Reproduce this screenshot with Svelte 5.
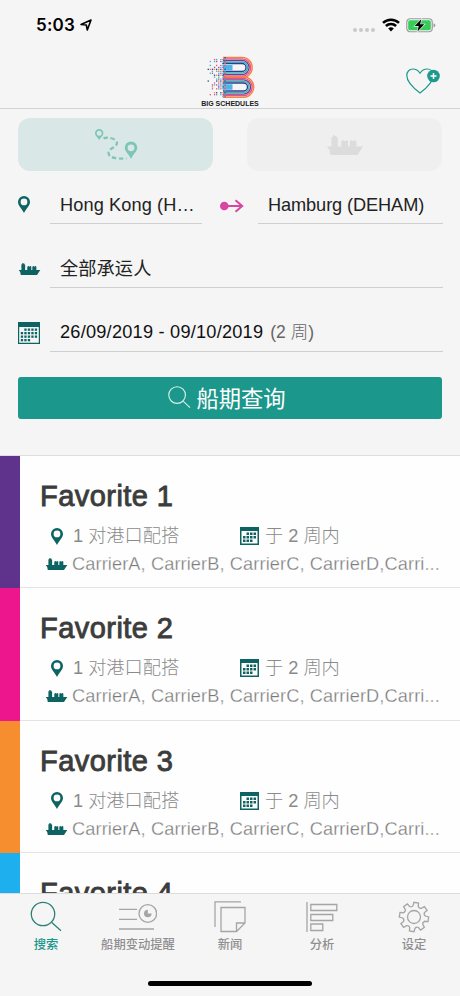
<script>
  const favorites = [
    { name: 'Favorite 1', color: 'purple', pairs: 1, weeks: 2 },
    { name: 'Favorite 2', color: 'pink', pairs: 1, weeks: 2 },
    { name: 'Favorite 3', color: 'orange', pairs: 1, weeks: 2 },
    { name: 'Favorite 4', color: 'blue' }
  ];
  const carriers = 'CarrierA, CarrierB, CarrierC, CarrierD,Carri...';

  const tabs = [
    { id: 'search', label: '搜索' },
    { id: 'alerts', label: '船期变动提醒' },
    { id: 'news', label: '新闻' },
    { id: 'analysis', label: '分析' },
    { id: 'settings', label: '设定' }
  ];
  let active = 'search';

  // logo stripes, from the outside in
  const stripes = ['#f58345', '#ec4f83', '#7a3b8e', '#35b5b0', '#2d3f92'];
  const lobes = [
    { y: 0.5, h: 22, x: 37 },
    { y: 20, h: 22, x: 38.5 }
  ];

  function lobePath(lobe, i) {
    const inset = 0.8 + i * 1.55;
    const r = lobe.h / 2 - inset;
    return `M18 ${lobe.y + inset}H${lobe.x}a${r} ${r} 0 0 1 0 ${r * 2}H18`;
  }

  // the left side of the logo breaks up into pixels
  const pixels = [];
  const pixelColors = ['#f58345', '#ec4f83', '#44aee5', '#2d3f92', '#35b5b0', '#a64a96'];
  for (let row = 0; row < 21; row++) {
    for (let col = 0; col < 10; col++) {
      const noise = (row * 37 + col * 53 + row * col * 11) % 17;
      if (noise < col * 1.9) {
        pixels.push({ x: 0.5 + col * 2.1, y: 1 + row * 1.95, fill: pixelColors[(row + (col % 2) * 3) % 6] });
      }
    }
  }

  // 8 teeth
  const gear = Array.from({ length: 8 }, (_, i) => {
    const at = (deg, r) => {
      const a = ((deg + i * 45 - 81) * Math.PI) / 180;
      return `${(16 + r * Math.cos(a)).toFixed(2)} ${(16 + r * Math.sin(a)).toFixed(2)}`;
    };
    return `${i ? 'L' : 'M'}${at(-14, 11.4)}L${at(-9, 14.7)}L${at(9, 14.7)}L${at(13, 11.4)}Q${at(22.5, 9.8)} ${at(31, 11.4)}`;
  }).join('') + 'Z';
</script>

{#snippet pin(cls)}
  <svg class={cls} viewBox="0 0 12 17">
    <path fill-rule="evenodd" d="M6 0a6 6 0 0 1 6 6c0 3.6-3.5 6-6 11C3.5 12 0 9.6 0 6a6 6 0 0 1 6-6zm0 2.500a3.400 3.400 0 1 0 0 6.800 3.400 3.400 0 0 0 0-6.800z" />
  </svg>
{/snippet}

{#snippet ship(cls)}
  <svg class={cls} viewBox="0 0 36 20">
    <path d="M0 11.500h4.500V2H6V0h1.500v1h2v1.500h1.200v9h3.600V6h1.200V5h1.200v1H19V5h1.200v1h.8v5.500h1.700V6h1.200V5h1.200v1h2.300V5h1.200v1h.8v5.500H36L30.500 20H3.500L2.500 15z" />
  </svg>
{/snippet}

{#snippet calendar(cls)}
  <svg class={cls} viewBox="0 0 22 22">
    <path d="M0 0h22v22H0zM1.200 5v15.800h19.600V5z" fill-rule="evenodd" />
    {#each [6.500, 10, 13.500, 17] as y, r}
      {#each [2.800, 6.300, 9.800, 13.300, 16.800] as x, c}
        {#if !(r === 0 && c < 1) && !(r === 3 && c > 2)}
          <rect {x} {y} width="2.300" height="2.300" />
        {/if}
      {/each}
    {/each}
  </svg>
{/snippet}

{#snippet smallCalendar(cls)}
  <svg class={cls} viewBox="0 0 19 18">
    <path d="M0 0h19v18H0zM1.500 4v12.500h16V4z" fill-rule="evenodd" />
    {#each [5.500, 9, 12.500] as y, r}
      {#each [3, 6.500, 10, 13.500] as x, c}
        {#if !(r === 0 && c < 1) && !(r === 2 && c > 2)}
          <rect {x} {y} width="2.500" height="2.500" />
        {/if}
      {/each}
    {/each}
  </svg>
{/snippet}

<div class="app">
  <header>
    <div class="status">
      <div class="clock">
        <span>5:03</span>
        <svg class="location" viewBox="0 0 12 12">
          <path d="M1 5.500 11 1 7.300 11 6.300 6z" />
        </svg>
      </div>
      <div class="signals">
        <i></i><i></i><i></i><i></i>
        <svg class="wifi" viewBox="0 0 18 14">
          <path d="M1 4.900a11.500 11.500 0 0 1 16 0M3.900 8a7.300 7.300 0 0 1 10.200 0" />
          <path class="wifi-dot" d="M6.200 10.600a4 4 0 0 1 5.600 0L9 13.500z" />
        </svg>
        <svg class="battery" viewBox="0 0 30 15">
          <rect class="shell" x=".75" y=".75" width="25.500" height="13" rx="3.500" />
          <rect class="charge" x="2.200" y="2.200" width="22.600" height="10.100" rx="1.800" />
          <path class="cap" d="M27.500 5.200q1.800.6 1.800 2.100t-1.800 2.100z" />
          <path class="bolt" d="M15.300 1.300 8.700 8.100h4L11.500 13.400l6.800-7.100h-4.100z" />
        </svg>
      </div>
    </div>
    <div class="brand">
      <div class="logo">
        <svg viewBox="0 0 50 43">
          {#each lobes as lobe}
            {#each stripes as color, i}
              <path d={lobePath(lobe, i)} stroke={color} />
            {/each}
          {/each}
          <path class="stem" d="M18 9h9.500v5.500H18zM18 28.300h9.500v5.500H18z" />
          {#each pixels as p}
            <rect x={p.x} y={p.y} width="1.300" height="1.300" fill={p.fill} />
          {/each}
        </svg>
        <span>BIG SCHEDULES</span>
      </div>
      <svg class="heart" viewBox="0 0 34 26">
        <path d="M14 25C8 20.500.8 14.500.8 7.500.8 3.500 3.500 1 6.800 1 10 1 12.500 2.800 14 5.200 15.500 2.800 18 1 21.200 1c3.300 0 6 2.500 6 6.500C27.200 14.500 20 20.500 14 25z" />
        <circle cx="27.500" cy="8" r="6.300" />
        <path class="plus" d="M27.500 5v6M24.500 8h6" />
      </svg>
    </div>
  </header>

  <section class="form">
    <div class="modes">
      <button class="mode selected" aria-label="Route">
        <svg class="route" viewBox="0 0 43 32">
          <path class="trail" d="M8.500 9.500c4-2 13 0 13.500 4.500.3 4-8.500 5.500-8.500 9.500 0 5 6.500 6.500 18 6" />
          <path fill-rule="evenodd" d="M4.200 0a4.200 4.200 0 0 1 4.200 4.200c0 2.400-2.600 3.800-4.200 6.800C2.600 8 0 6.600 0 4.200A4.200 4.200 0 0 1 4.200 0zm0 1.700a2.500 2.500 0 1 0 0 5 2.500 2.500 0 0 0 0-5z" />
          <path fill-rule="evenodd" d="M36 12.500a6.300 6.300 0 0 1 6.300 6.300c0 3.700-4 6-6.300 11.200-2.300-5.200-6.300-7.500-6.300-11.200a6.300 6.300 0 0 1 6.300-6.300zm0 2.900a3.400 3.400 0 1 0 0 6.800 3.400 3.400 0 0 0 0-6.800z" />
        </svg>
      </button>
      <button class="mode" aria-label="Vessel">{@render ship('vessel')}</button>
    </div>

    <div class="row ports">
      <div class="icon">{@render pin('pin')}</div>
      <div class="field origin">Hong Kong (H…</div>
      <svg class="arrow" viewBox="0 0 24 14">
        <circle cx="4.300" cy="7" r="4.300" />
        <path d="M5 7h17M15.500 1.300 22.200 7l-6.700 5.700" />
      </svg>
      <div class="field dest">Hamburg (DEHAM)</div>
    </div>
    <div class="row carrier">
      <div class="icon">{@render ship('boat')}</div>
      <div class="field">全部承运人</div>
    </div>
    <div class="row dates">
      <div class="icon">{@render calendar('cal')}</div>
      <div class="field"><span class="range">26/09/2019 - 09/10/2019</span><span class="weeks">(2 周)</span></div>
    </div>

    <button class="submit">
      <svg viewBox="0 0 24 24"><circle cx="9.500" cy="9.500" r="8.700" /><path d="m16 16 7 6.500" /></svg>
      <span>船期查询</span>
    </button>
  </section>

  <main>
    {#each favorites as fav}
      <article class={fav.color}>
        <h2>{fav.name}</h2>
        {#if fav.pairs}
          <div class="meta">
            <div class="pair">{@render pin('pin')}<span>{fav.pairs} 对港口配搭</span></div>
            <div class="when">{@render smallCalendar('cal')}<span>于 {fav.weeks} 周内</span></div>
          </div>
          <div class="carriers">{@render ship('boat')}<span>{carriers}</span></div>
        {/if}
      </article>
    {/each}
  </main>

  <nav>
    {#each tabs as tab}
      <button class="tab" class:active={active === tab.id} on:click={() => (active = tab.id)}>
        {#if tab.id === 'search'}
          <svg viewBox="0 0 32 32"><circle cx="13" cy="13" r="11.700" /><path d="m21.800 21.500 9.200 8.300" /></svg>
        {:else if tab.id === 'alerts'}
          <svg class="wide" viewBox="0 0 38 32">
            <path d="M0 8.300h18M0 18.300h18M0 28h35" />
            <circle cx="28.800" cy="12.500" r="8.800" />
            <path class="solid" d="M28.800 12.500V8.700a3.800 3.800 0 1 0 3.800 3.800z" />
          </svg>
        {:else if tab.id === 'news'}
          <svg viewBox="0 0 32 32">
            <path d="M1 26V.8h26M7 6.500h24V22l-8.500 8.500H7zM31 22h-8.500v8.500" />
          </svg>
        {:else if tab.id === 'analysis'}
          <svg viewBox="0 0 32 32">
            <path d="M1 1v30M4.800 3.500h26v6h-26zM4.800 13.500h22v6h-22zM4.800 23h12v6.500h-12z" />
          </svg>
        {:else}
          <svg viewBox="0 0 32 32"><path d={gear} /><circle cx="16" cy="16" r="6.500" /></svg>
        {/if}
        <span>{tab.label}</span>
      </button>
    {/each}
    <div class="home"></div>
  </nav>
</div>

<style>
  :global(body) {
    margin: 0;
  }

  .app {
    width: 460px;
    height: 996px;
    display: flex;
    flex-direction: column;
    overflow: hidden;
    background: #f5f5f5;
    color: #222;
    font: 18.2px "Liberation Sans", "Noto Sans CJK SC", sans-serif;
  }

  svg {
    display: block;
    flex: none;
  }

  button {
    border: 0;
    padding: 0;
    font-family: inherit;
    cursor: pointer;
  }

  header {
    flex: none;
    height: 109px;
    box-sizing: border-box;
    border-bottom: 1px solid #d2d2d2;
  }

  .status {
    height: 50px;
    padding: 0 24px 0 36px;
    display: flex;
    align-items: center;
    justify-content: space-between;
  }

  .clock {
    display: flex;
    align-items: center;
    gap: 5px;
    color: #000;
    font: 600 17px Inter, sans-serif;
    letter-spacing: 0.2px;
  }

  .location {
    width: 12px;
    height: 12px;
    fill: none;
    stroke: #000;
    stroke-width: 1.6;
    stroke-linejoin: round;
  }

  .signals {
    display: flex;
    align-items: center;
    gap: 2px;
  }

  .signals i {
    width: 4px;
    height: 4px;
    margin-top: 9px;
    border-radius: 50%;
    background: #c9c9c9;
  }

  .wifi {
    width: 18px;
    height: 14px;
    margin-left: 5px;
    fill: none;
    stroke: #000;
    stroke-width: 2.5;
  }

  .wifi .wifi-dot {
    fill: #000;
    stroke: none;
  }

  .battery {
    width: 30px;
    height: 15px;
    margin-left: 4px;
  }

  .shell {
    fill: none;
    stroke: #9c9c9c;
    stroke-width: 1.2;
  }

  .charge {
    fill: #35cc5a;
  }

  .cap {
    fill: #9c9c9c;
  }

  .bolt {
    stroke: #f5f5f5;
    stroke-width: 1.2;
    paint-order: stroke;
  }

  .brand {
    height: 58px;
    padding: 6px 20px 0 200px;
    box-sizing: border-box;
    display: flex;
    justify-content: space-between;
  }

  .logo {
    width: 60px;
    display: flex;
    flex-direction: column;
    align-items: center;
  }

  .logo svg {
    width: 50px;
    height: 43px;
  }

  .logo path {
    fill: none;
    stroke-width: 1.35;
  }

  .logo .stem {
    fill: #4db4ec;
  }

  .logo span {
    font: bold 7px/9px "Liberation Sans", sans-serif;
    white-space: nowrap;
    color: #222;
  }

  .heart {
    width: 34px;
    height: 26px;
    margin-top: 12px;
    fill: none;
    stroke: #1d998d;
    stroke-width: 1.2;
  }

  .heart circle {
    fill: #1d998d;
    stroke: none;
  }

  .heart .plus {
    stroke: #fff;
    stroke-width: 1.5;
  }

  .form {
    flex: none;
    height: 347px;
    box-sizing: border-box;
    padding: 9px 17px 0 18px;
    border-bottom: 1px solid #dedede;
  }

  .modes {
    display: flex;
    justify-content: space-between;
    padding-right: 1px;
  }

  .mode {
    width: 195px;
    height: 53px;
    border-radius: 12px;
    background: #efefef;
    display: flex;
    align-items: center;
    justify-content: center;
  }

  .mode.selected {
    background: #d9e8e6;
  }

  .route {
    width: 43px;
    height: 32px;
    margin-left: 1px;
    fill: #7dc5b9;
  }

  .trail {
    fill: none;
    stroke: #7dc5b9;
    stroke-width: 2.2;
    stroke-dasharray: 4.5 2.5;
  }

  .vessel {
    width: 36px;
    height: 20px;
    fill: #dcdcdc;
  }

  .row {
    display: flex;
    align-items: center;
  }

  .icon {
    width: 32px;
    flex: none;
  }

  .pin {
    width: 12px;
    height: 17px;
    fill: #0d6361;
  }

  .boat {
    width: 23px;
    height: 12px;
    fill: #0d6361;
  }

  .cal {
    width: 22px;
    height: 22px;
    fill: #0d6361;
  }

  .field {
    flex: 1;
    height: 38px;
    line-height: 38px;
    padding-left: 10px;
    border-bottom: 1px solid #cfcfcf;
    white-space: nowrap;
  }

  .ports {
    height: 39px;
    margin-top: 14px;
  }

  .ports .field {
    line-height: 40px;
  }

  .origin {
    flex: none;
    width: 142px;
    letter-spacing: 0.1px;
  }

  .dest {
    margin-left: -1px;
    letter-spacing: -0.1px;
  }

  .arrow {
    width: 24px;
    height: 14px;
    margin: 2px 15px 0 18px;
    fill: #d946a0;
  }

  .arrow path {
    fill: none;
    stroke: #d946a0;
    stroke-width: 2;
  }

  .carrier {
    margin-top: 25px;
  }

  .carrier .field {
    line-height: 41px;
    letter-spacing: 0.1px;
  }

  .dates {
    margin-top: 25px;
  }

  .range {
    color: #111;
    letter-spacing: 0.22px;
  }

  .weeks {
    margin-left: 7px;
    color: #666;
    font-weight: 300;
    font-size: 17.5px;
  }

  .submit {
    width: 424px;
    height: 42px;
    margin-top: 25px;
    padding: 0 6px 2px 0;
    border-radius: 3px;
    background: #1c978b;
    color: #fff;
    font-size: 22.3px;
    display: flex;
    align-items: center;
    justify-content: center;
    gap: 5px;
  }

  .submit svg {
    width: 23px;
    height: 23px;
    fill: none;
    stroke: #d8f0ec;
    stroke-width: 1.2;
  }

  main {
    flex: 1;
    min-height: 0;
    overflow: hidden;
    background: #fefefe;
  }

  article {
    height: 132.3px;
    box-sizing: border-box;
    padding: 21px 0 0 20px;
    border-left: 20px solid;
    box-shadow: inset 0 -1px #e4e4e4;
  }

  .purple {
    border-color: #5f328c;
  }

  .pink {
    border-color: #ed168c;
  }

  .orange {
    border-color: #f68d2e;
  }

  .blue {
    border-color: #1eb0ee;
  }

  h2 {
    margin: 0;
    height: 45px;
    color: #3c3c3c;
    font-size: 29px;
    font-weight: 400;
    line-height: 38px;
    letter-spacing: 0.45px;
    -webkit-text-stroke: 0.9px #3c3c3c;
  }

  .meta,
  .pair,
  .when,
  .carriers {
    display: flex;
    align-items: center;
  }

  .meta,
  .carriers {
    height: 28px;
    color: #8a8a8a;
    font-weight: 300;
    line-height: 28px;
    white-space: nowrap;
  }

  .pair {
    width: 189px;
    padding-left: 11px;
    gap: 10px;
  }

  .when {
    gap: 6px;
  }

  .when .cal {
    width: 19px;
    height: 18px;
  }

  .carriers {
    padding-left: 5px;
    gap: 4px;
  }

  .carriers span {
    color: #7a7a7a;
    letter-spacing: 0.11px;
    /* thins the regular cut down to a light one */
    -webkit-text-stroke: 0.3px #fefefe;
  }

  nav {
    flex: none;
    height: 103px;
    box-sizing: border-box;
    border-top: 1px solid #dcdcdc;
    display: grid;
    grid-template-columns: repeat(5, 1fr);
    grid-template-rows: 87px auto;
  }

  .tab {
    padding-top: 7px;
    background: none;
    color: #8f8f8f;
    font-size: 12.3px;
    font-weight: 500;
    display: flex;
    flex-direction: column;
    align-items: center;
    gap: 3px;
  }

  .tab span {
    line-height: 18px;
    white-space: nowrap;
  }

  .tab svg {
    width: 32px;
    height: 32px;
    fill: none;
    stroke: #a5a5a5;
    stroke-width: 1.3;
  }

  .tab .wide {
    width: 38px;
  }

  .tab .solid {
    fill: #a5a5a5;
    stroke: none;
  }

  .tab.active {
    color: #1c978b;
  }

  .tab.active svg {
    stroke: #2c8076;
  }

  .home {
    grid-column: 1 / -1;
    justify-self: center;
    width: 164px;
    height: 5px;
    border-radius: 3px;
    background: #000;
  }
</style>
